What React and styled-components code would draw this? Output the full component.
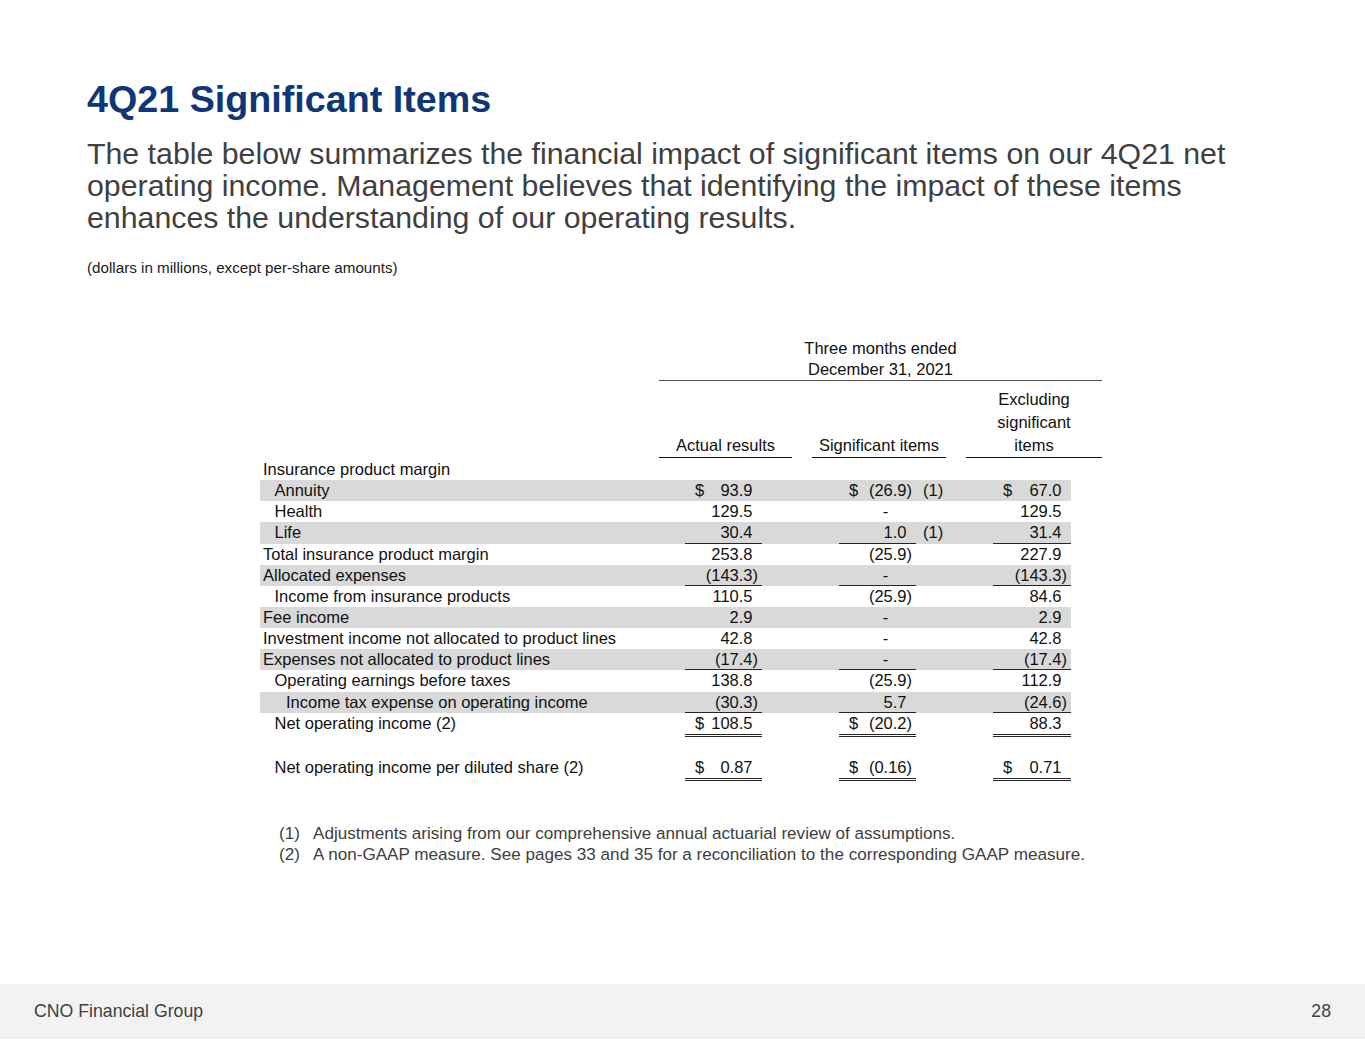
import styled, { createGlobalStyle } from "styled-components";

const GlobalStyle = createGlobalStyle`
  html, body {
    margin: 0;
    padding: 0;
    background: #ffffff;
  }
  body {
    font-family: "Liberation Sans", Arial, sans-serif;
    overflow: hidden;
  }
`

const ROW_H = 21.15

const rows = [
  { label: "Insurance product margin", indent: 0 },
  { label: "Annuity", indent: 1, shaded: true, a: ["$", "93.9"], s: ["$", "(26.9)"], sNote: "(1)", e: ["$", "67.0"] },
  { label: "Health", indent: 1, a: ["", "129.5"], s: ["", "-"], e: ["", "129.5"] },
  { label: "Life", indent: 1, shaded: true, a: ["", "30.4"], s: ["", "1.0"], sNote: "(1)", e: ["", "31.4"], rule: "single" },
  { label: "Total insurance product margin", indent: 0, a: ["", "253.8"], s: ["", "(25.9)"], e: ["", "227.9"] },
  { label: "Allocated expenses", indent: 0, shaded: true, a: ["", "(143.3)"], s: ["", "-"], e: ["", "(143.3)"], rule: "single" },
  { label: "Income from insurance products", indent: 1, a: ["", "110.5"], s: ["", "(25.9)"], e: ["", "84.6"] },
  { label: "Fee income", indent: 0, shaded: true, a: ["", "2.9"], s: ["", "-"], e: ["", "2.9"] },
  { label: "Investment income not allocated to product lines", indent: 0, a: ["", "42.8"], s: ["", "-"], e: ["", "42.8"] },
  { label: "Expenses not allocated to product lines", indent: 0, shaded: true, a: ["", "(17.4)"], s: ["", "-"], e: ["", "(17.4)"], rule: "single" },
  { label: "Operating earnings before taxes", indent: 1, a: ["", "138.8"], s: ["", "(25.9)"], e: ["", "112.9"] },
  { label: "Income tax expense on operating income", indent: 2, shaded: true, a: ["", "(30.3)"], s: ["", "5.7"], e: ["", "(24.6)"], rule: "single" },
  { label: "Net operating income (2)", indent: 1, a: ["$", "108.5"], s: ["$", "(20.2)"], e: ["", "88.3"], rule: "double" },
  { spacer: true },
  { label: "Net operating income per diluted share (2)", indent: 1, a: ["$", "0.87"], s: ["$", "(0.16)"], e: ["$", "0.71"], rule: "double" },
]

// accounting format: positives leave room for ")", zero dash sits two digits in
const padFor = (v) => {
  if (v === "-") return 1.445
  if (v.startsWith("(")) return 0
  return 0.333
}

const Cell = ({ data, rule }) => {
  if (!data) return <Value />
  const [dollar, v] = data
  return (
    <Value rule={rule}>
      {dollar && <Dollar>{dollar}</Dollar>}
      <Amount pad={padFor(v)}>{v}</Amount>
    </Value>
  )
}

const App = () => {
  return (
    <Page>
      <GlobalStyle />
      <Content>
        <Title>4Q21 Significant Items</Title>
        <Lead>
          The table below summarizes the financial impact of significant items on our 4Q21 net<br />
          operating income. Management believes that identifying the impact of these items<br />
          enhances the understanding of our operating results.
        </Lead>
        <Units>(dollars in millions, except per-share amounts)</Units>

        <Table>
          <HeadBlock>
            <Period>
              Three months ended<br />
              December 31, 2021
            </Period>
            <ColHeads>
              <ColHead>Actual results</ColHead>
              <ColHead>Significant items</ColHead>
              <ColHead>Excluding<br />significant<br />items</ColHead>
            </ColHeads>
          </HeadBlock>

          {rows.map((r, i) =>
            r.spacer ? (
              <Spacer key={i} />
            ) : (
              <Row key={i} shaded={r.shaded}>
                <Label indent={r.indent}>{r.label}</Label>
                <Cell data={r.a} rule={r.rule} />
                <Gap />
                <Cell data={r.s} rule={r.rule} />
                <Note>{r.sNote}</Note>
                <Cell data={r.e} rule={r.rule} />
              </Row>
            )
          )}
        </Table>

        <Footnotes>
          <Footnote>
            <Mark>(1)</Mark>
            <span>Adjustments arising from our comprehensive annual actuarial review of assumptions.</span>
          </Footnote>
          <Footnote>
            <Mark>(2)</Mark>
            <span>A non-GAAP measure. See pages 33 and 35 for a reconciliation to the corresponding GAAP measure.</span>
          </Footnote>
        </Footnotes>
      </Content>

      <Footer>
        <FooterText>CNO Financial Group</FooterText>
        <FooterText>28</FooterText>
      </Footer>
    </Page>
  )
}

const Page = styled.div`
width: 1365px;
height: 1055px;
display: flex;
flex-direction: column;
`
const Content = styled.div`
padding: 78px 0 0 87px;
display: flex;
flex-direction: column;
`
const Title = styled.h1`
margin: 0;
font-size: 37.7px;
line-height: 43px;
font-weight: bold;
color: #0f3677;
`
const Lead = styled.p`
margin: 17px 0 0;
font-size: 30.3px;
line-height: 32px;
color: #404040;
white-space: nowrap;
`
const Units = styled.div`
margin-top: 25px;
font-size: 15.2px;
line-height: 18px;
color: #1a1a1a;
`
const Table = styled.div`
margin: 61px 0 0 173px;
width: 842px;
color: #111111;
font-size: 16.5px;
`
const HeadBlock = styled.div`
margin-left: 399px;
margin-bottom: 1px;
width: 443px;
`
const Period = styled.div`
text-align: center;
line-height: 21px;
border-bottom: 1px solid #555555;
`
const ColHeads = styled.div`
margin-top: 7px;
display: grid;
grid-template-columns: 133px 134px 136px;
column-gap: 20px;
align-items: end;
`
const ColHead = styled.div`
text-align: center;
line-height: 23px;
border-bottom: 1px solid #111111;
`
const Row = styled.div`
width: 811px;
display: grid;
grid-template-columns: 425px 77px 77px 77px 77px 78px;
background-color: ${props => props.shaded ? "#d9d9d9" : "transparent"};
`
const Label = styled.div`
height: ${ROW_H}px;
line-height: ${ROW_H}px;
padding-left: ${props => 3 + props.indent * 11.5}px;
white-space: nowrap;
`
const Value = styled.div`
height: ${ROW_H}px;
line-height: ${ROW_H}px;
display: flex;
align-items: center;
padding: 0 4px 0 10px;
box-shadow: ${props => props.rule === "single" ? "inset 0 -1px 0 #262626" : "none"};
border-bottom: ${props => props.rule === "double" ? "3px double #262626" : "none"};
`
const Dollar = styled.span`
`
const Amount = styled.span`
margin-left: auto;
padding-right: ${props => props.pad}em;
`
const Gap = styled.div`
`
const Note = styled.div`
height: ${ROW_H}px;
line-height: ${ROW_H}px;
padding-left: 7px;
`
const Spacer = styled.div`
height: 19.8px;
`
const Footnotes = styled.div`
margin: 42px 0 0 192px;
font-size: 17.1px;
line-height: 21px;
color: #404040;
`
const Footnote = styled.div`
display: flex;
white-space: nowrap;
`
const Mark = styled.span`
width: 34px;
flex-shrink: 0;
`
const Footer = styled.div`
margin-top: auto;
margin-bottom: 16px;
height: 55px;
padding: 0 34px;
display: flex;
align-items: center;
justify-content: space-between;
background-color: #f2f2f2;
`
const FooterText = styled.span`
font-size: 17.7px;
color: #404040;
`

export default App;
